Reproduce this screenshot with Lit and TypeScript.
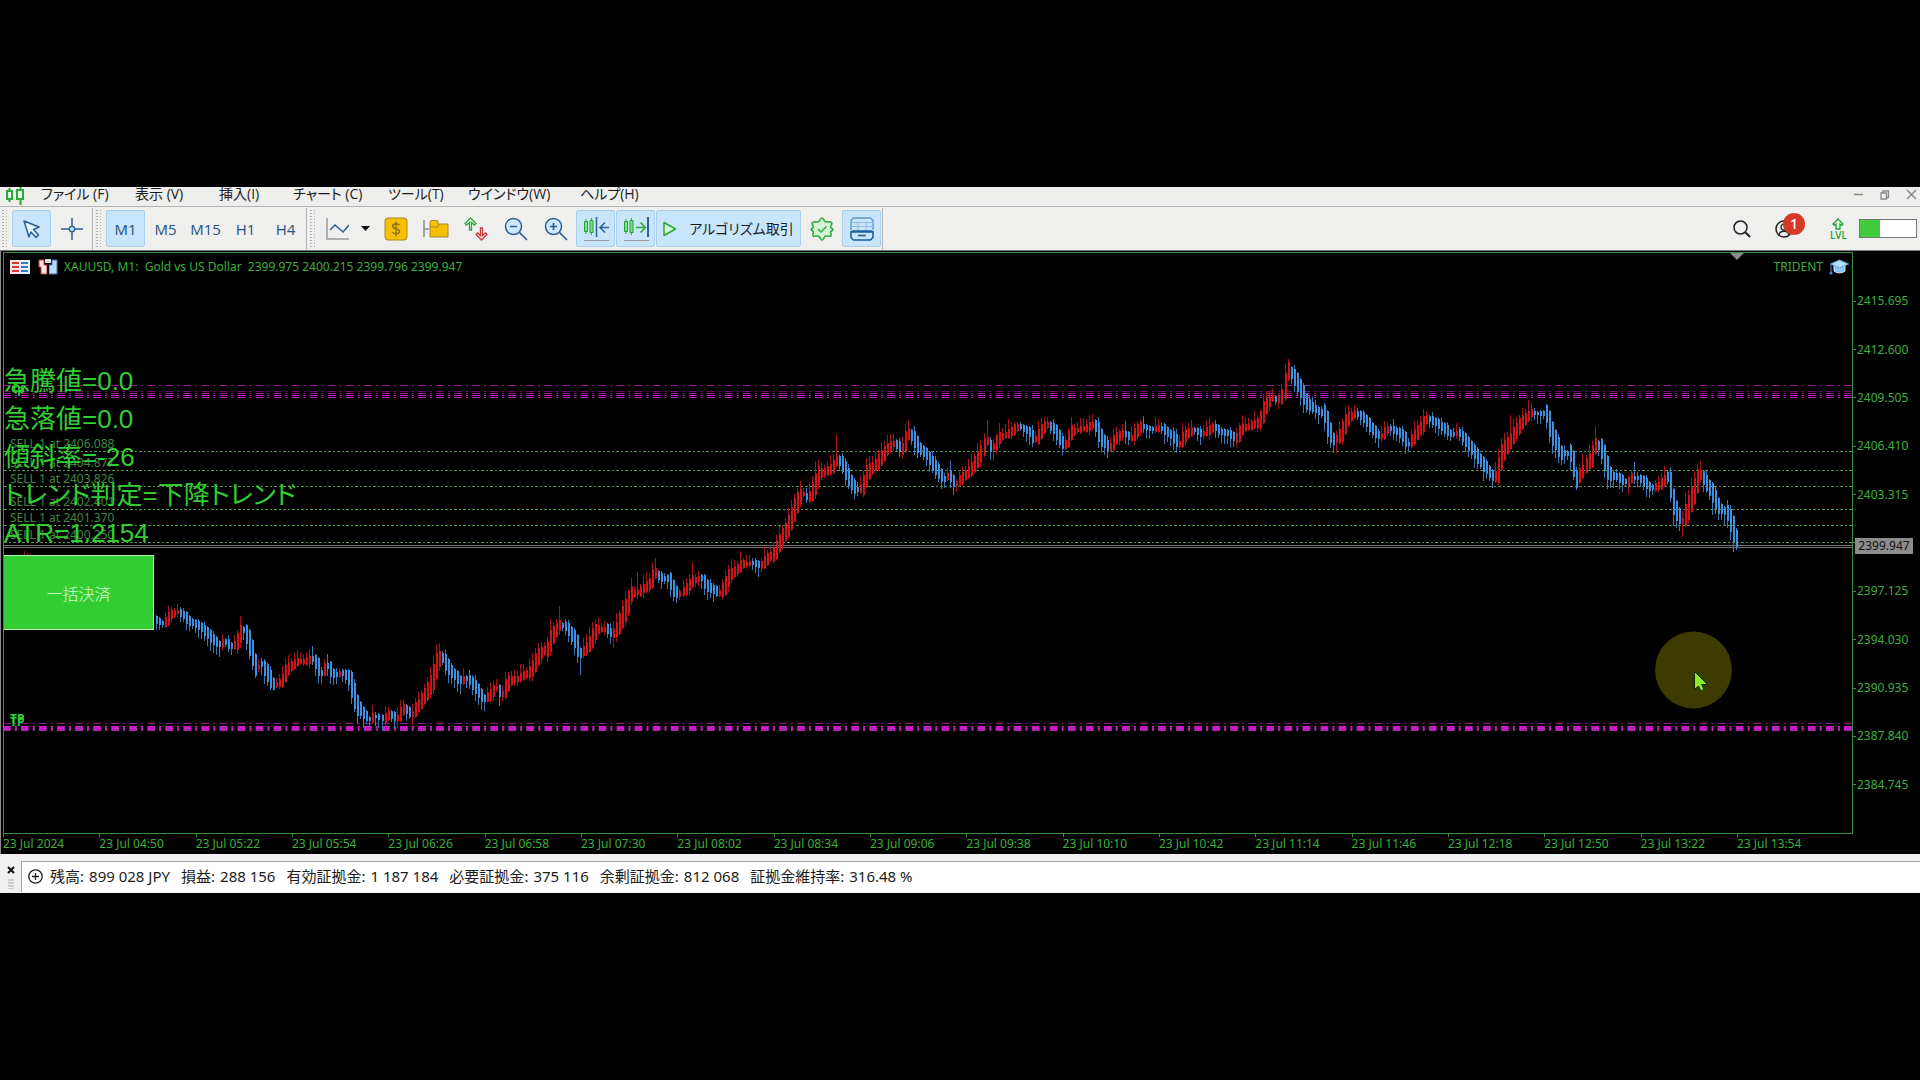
import { LitElement, html, css, svg } from "lit";
import { customElement } from "lit/decorators.js";

/* Plot canvas: the chart is drawn in this coordinate window. */
const VIEW = { x: 4, y: 253, w: 1848, h: 580 };
const STEP = 3.01;
const LAST_X = 1737;

/* Course of the price, as points on the canvas. */
const COURSE: number[][] = [
  [155, 618], [163, 622], [167, 621], [171, 614], [178, 611], [183, 613], [190, 620], [200, 625], [208, 632], [215, 640],
  [220, 643], [226, 641], [232, 645], [237, 643], [241, 633], [244, 629], [248, 635], [253, 652], [257, 668], [262, 663],
  [267, 670], [272, 680], [275, 684], [282, 681], [288, 668], [298, 661], [307, 660], [313, 658], [317, 662], [322, 672],
  [328, 665], [335, 674], [343, 672], [350, 677], [353, 687], [357, 703], [363, 711], [370, 718], [375, 715], [385, 718],
  [390, 713], [398, 717], [405, 707], [413, 713], [420, 703], [427, 692], [433, 680], [439, 658], [443, 657], [447, 663],
  [453, 672], [462, 680], [468, 677], [477, 687], [484, 698], [490, 695], [497, 687], [503, 693], [510, 680], [520, 677],
  [532, 670], [540, 653], [548, 648], [553, 635], [561, 623], [568, 627], [575, 638], [581, 652], [588, 647], [597, 629],
  [608, 628], [613, 634], [618, 627], [627, 607], [632, 593], [640, 591], [650, 583], [656, 572], [663, 577], [670, 578],
  [675, 590], [680, 593], [687, 588], [693, 580], [702, 577], [708, 585], [720, 592], [725, 587], [730, 575], [737, 569],
  [743, 563], [753, 562], [762, 564], [768, 558], [775, 553], [780, 542], [790, 523], [797, 503], [803, 492], [809, 497],
  [815, 487], [818, 475], [827, 470], [833, 467], [838, 458], [843, 463], [850, 478], [857, 489], [863, 487], [868, 472],
  [878, 462], [888, 448], [895, 442], [903, 448], [909, 433], [913, 435], [920, 447], [927, 453], [937, 468], [945, 478],
  [950, 474], [956, 483], [962, 478], [972, 468], [983, 450], [988, 440], [993, 447], [1000, 437], [1010, 432], [1020, 425],
  [1030, 431], [1035, 439], [1038, 437], [1047, 423], [1055, 428], [1065, 445], [1073, 430], [1087, 427], [1095, 423],
  [1102, 437], [1110, 447], [1117, 437], [1125, 432], [1132, 437], [1142, 425], [1153, 428], [1163, 427], [1173, 435],
  [1180, 443], [1187, 433], [1195, 429], [1203, 433], [1215, 426], [1222, 431], [1228, 432], [1237, 437], [1243, 428],
  [1260, 421], [1265, 408], [1272, 397], [1280, 399], [1285, 390], [1289, 370], [1293, 373], [1300, 385], [1308, 403],
  [1317, 409], [1325, 413], [1330, 430], [1335, 440], [1342, 433], [1348, 418], [1357, 412], [1365, 417], [1373, 428],
  [1381, 436], [1390, 427], [1402, 433], [1409, 443], [1417, 433], [1428, 417], [1438, 422], [1452, 433], [1460, 432],
  [1467, 440], [1480, 458], [1495, 477], [1498, 473], [1503, 452], [1512, 438], [1522, 422], [1532, 412], [1547, 413],
  [1553, 433], [1562, 452], [1572, 453], [1577, 478], [1585, 468], [1593, 455], [1597, 442], [1602, 448], [1610, 473],
  [1620, 477], [1628, 482], [1632, 477], [1640, 477], [1652, 487], [1660, 485], [1668, 476], [1671, 484], [1675, 507],
  [1683, 520], [1687, 512], [1695, 490], [1700, 473], [1704, 477], [1712, 490], [1720, 507], [1728, 512], [1733, 524],
  [1737, 538],
];

/* Wick ends that stand out from their neighbours. */
const SPIKES: number[][] = [
  [171, 607], [199, 638], [220, 657], [241, 616], [256, 678], [274, 690], [313, 646], [328, 654], [332, 684], [357, 724],
  [370, 727], [379, 728], [385, 729], [398, 728], [404, 699], [414, 725], [439, 643], [461, 694], [469, 670], [484, 711],
  [503, 702], [561, 606], [551, 619], [582, 675], [614, 648], [638, 572], [656, 558], [677, 603], [693, 562], [700, 571],
  [717, 597], [741, 551], [767, 550], [817, 461], [837, 434], [857, 496], [907, 424], [945, 488], [951, 461], [956, 492],
  [988, 420], [993, 461], [999, 423], [1009, 419], [1047, 417], [1064, 455], [1108, 458], [1125, 421], [1143, 416],
  [1180, 450], [1217, 420], [1231, 447], [1265, 394], [1272, 388], [1279, 409], [1289, 359], [1319, 424], [1336, 453],
  [1354, 405], [1378, 448], [1393, 419], [1408, 452], [1427, 411], [1493, 488], [1511, 415], [1529, 400], [1577, 490],
  [1583, 454], [1595, 426], [1608, 489], [1628, 494], [1634, 462], [1650, 498], [1670, 467], [1674, 526], [1683, 537],
  [1685, 493], [1700, 461], [1713, 515], [1725, 525], [1728, 500], [1734, 552],
];

const ENTRIES = [
  { price: "2406.088", y: 451 },
  { price: "2404.877", y: 470 },
  { price: "2403.826", y: 486 },
  { price: "2402.401", y: 509 },
  { price: "2401.370", y: 525 },
  { price: "2400.250", y: 542 },
];

const PRICES = ["2415.695", "2412.600", "2409.505", "2406.410", "2403.315", "", "2397.125", "2394.030", "2390.935", "2387.840", "2384.745"];

const TIMES = [
  "2024", "04:50", "05:22", "05:54", "06:26", "06:58", "07:30", "08:02", "08:34", "09:06", "09:38", "10:10", "10:42",
  "11:14", "11:46", "12:18", "12:50", "13:22", "13:54",
];

const MENUS = ["ファイル (F)", "表示 (V)", "挿入(I)", "チャート (C)", "ツール(T)", "ウインドウ(W)", "ヘルプ(H)"];

const ACCOUNT: string[][] = [
  ["残高", "899 028 JPY"], ["損益", "288 156"], ["有効証拠金", "1 187 184"], ["必要証拠金", "375 116"],
  ["余剰証拠金", "812 068"], ["証拠金維持率", "316.48 %"],
];

const noise = (n: number) => {
  const s = Math.sin(n * 127.1) * 43758.5453;
  return s - Math.floor(s);
};

const courseAt = (x: number) => {
  const k = COURSE.findIndex((p) => p[0] >= x);
  if (k < 0) return COURSE[COURSE.length - 1][1];
  if (k === 0) return COURSE[0][1];
  const [ax, ay] = COURSE[k - 1];
  const [bx, by] = COURSE[k];
  return ay + ((by - ay) * (x - ax)) / (bx - ax);
};

const buildCandles = () => {
  const paths = { upBody: "", upWick: "", downBody: "", downWick: "" };
  const count = Math.floor((LAST_X - 155) / STEP);
  for (let i = count; i >= 0; i--) {
    const x = Math.round(LAST_X - i * STEP);
    const mid = courseAt(x) + 1;
    const slope = courseAt(x + 3) - courseAt(x - 3);
    const up = slope < 0;
    const half = Math.min(13, 1.5 + Math.abs(slope) * 0.6 + noise(i + 3) * 1.5);
    const top = Math.round(mid - half);
    const bottom = Math.round(mid + half);
    const lead = 2 + noise(i) * 7;
    const lag = noise(i + 77) > 0.6 ? 1 + noise(i + 9) * 4 : 1;
    let wickTop = Math.round(top - (up ? lead : lag));
    let wickBottom = Math.round(bottom + (up ? lag : lead));
    const spike = SPIKES.find((s) => Math.abs(s[0] - x) <= 1);
    if (spike) {
      if (spike[1] < mid) wickTop = Math.min(top, spike[1]);
      else wickBottom = Math.max(bottom, spike[1]);
    }
    const body = `M${x - 1} ${top}h2v${bottom - top}h-2z`;
    const wick = `M${x - 1} ${wickTop}h1v${wickBottom - wickTop}h-1z`;
    if (up) {
      paths.upBody += body;
      paths.upWick += wick;
    } else {
      paths.downBody += body;
      paths.downWick += wick;
    }
  }
  return paths;
};

const left = (x: number) => `left:${((x - VIEW.x) / VIEW.w) * 100}%`;
const top = (y: number) => `top:${((y - VIEW.y) / VIEW.h) * 100}%`;

@customElement("trade-chart")
export class TradeChart extends LitElement {
  static styles = css`
    :host {
      display: block;
      background: #000;
      color: #3fae3f;
      font: 12px/16px "Noto Sans", "Open Sans", sans-serif;
      border-left: 1px solid #8a8a8a;
      padding: 1px 0 0 2px;
    }
    .grid {
      display: grid;
      grid-template-columns: 1fr 67px;
    }
    .plot {
      position: relative;
      border: 1px solid #3b8f3b;
      overflow: hidden;
    }
    .canvas {
      display: block;
      width: 100%;
      height: auto;
      aspect-ratio: 1848 / 580;
    }
    .head {
      position: absolute;
      top: 5px;
      left: 6px;
      right: 3px;
      display: flex;
      align-items: center;
      gap: 6px;
      line-height: 18px;
      white-space: pre;
    }
    .head svg {
      flex: none;
    }
    .icons {
      display: flex;
      gap: 8px;
    }
    .title {
      flex: 1;
    }
    .entry {
      position: absolute;
      left: 6px;
      line-height: 16px;
      margin-top: -16px;
      color: #438543;
    }
    .tag {
      position: absolute;
      color: #32cd32;
      font-weight: 700;
      line-height: 14px;
    }
    .readout {
      position: absolute;
      left: 0;
      margin: 0;
      font: 26px/38px "Liberation Sans", "Noto Sans CJK JP", sans-serif;
      font-feature-settings: "palt";
      color: #32cd32;
      white-space: nowrap;
    }
    .readout div {
      height: 38px;
    }
    .close-all {
      position: absolute;
      left: 0;
      width: 150px;
      height: 75px;
      padding: 0;
      background: #32cd32;
      border: 1px solid #b8eeb0;
      border-left: 0;
      color: #dcffd4;
      font: 300 16px/20px "Noto Sans CJK JP", sans-serif;
    }
    .prices {
      position: relative;
      padding-top: 25px;
      display: flex;
      flex-direction: column;
    }
    .price {
      flex: 0 0 8.684%;
      display: flex;
      align-items: center;
      gap: 1px;
    }
    .price::before {
      content: "";
      width: 3px;
      height: 1px;
      background: #3b8f3b;
    }
    .last {
      position: absolute;
      left: 2px;
      top: 286px;
      width: 58px;
      box-sizing: border-box;
      text-align: center;
      background: #8c8c8c;
      color: #111;
    }
    .times {
      display: flex;
      height: 20px;
    }
    .time {
      flex: 0 0 5.207%;
      position: relative;
      padding-top: 1px;
      line-height: 18px;
      white-space: nowrap;
    }
    .time::before {
      content: "";
      position: absolute;
      left: 0;
      top: 0;
      width: 1px;
      height: 3px;
      background: #3b8f3b;
    }
  `;

  private candles = buildCandles();

  private rails(ys: number[][]) {
    return ys.map(
      ([y, w, o]) => svg`<line x1="3" x2="1852" y1=${y} y2=${y} stroke="#cc22cc" stroke-width=${w} stroke-opacity=${o}
        stroke-dasharray="7.8 4.05 2 4.2" stroke-dashoffset="0.1" />`,
    );
  }

  render() {
    const c = this.candles;
    return html`
      <div class="grid">
        <div class="plot">
          <svg class="canvas" viewBox="4 253 1848 580" role="img" aria-label="XAUUSD M1">
            ${this.rails([[385.5, 1, 0.75], [391.5, 1, 0.5], [393.5, 1, 0.8], [395.5, 1, 1], [397.5, 1, 0.95], [723.5, 1, 0.7], [728, 4, 0.95], [730.5, 1, 0.85]])}
            ${ENTRIES.map((e) => svg`<line x1="4" x2="1852" y1=${e.y + 0.5} y2=${e.y + 0.5} stroke="#4f9a4f" stroke-dasharray="3 2 2 2" />`)}
            <path d="M4 545.5H1852M4 547.5H1852" stroke="#777" />
            <g shape-rendering="crispEdges">
              <path d="M24 551h1v4h-1zM27 553h1v2h-1zM30 553h1v2h-1z" fill="#8e1414" />
              <path d=${c.upWick} fill="#a81216" />
              <path d=${c.downWick} fill="#3c78b8" />
              <path d=${c.upBody} fill="#d01418" />
              <path d=${c.downBody} fill="#3d90e2" />
            </g>
            <path d="M1730 253h14l-7 7z" fill="#8c8c8c" />
            <circle cx="1693.5" cy="670" r="38.5" fill="#3c3b00" />
            <path d="M1694.5 671.5v18l4-3.500 2.500 5 3-1.500-2.300-5h5.800z" fill="#8dec2a" stroke="#0c2a04" />
          </svg>
          <div class="head">
            <span class="icons">
              <svg width="20" height="16" viewBox="0 0 20 16">
                <path d="M0 1h10v14H0z" fill="#fbe4e4" /><path d="M10 1h10v14H10z" fill="#e4f0fc" />
                <path d="M2 4h7M2 8h7M2 12h7" stroke="#d23c3c" stroke-width="2" />
                <path d="M11 4h7M11 8h7M11 12h7" stroke="#3c78c0" stroke-width="2" />
              </svg>
              <svg width="20" height="16" viewBox="0 0 20 16">
                <path d="M1 1h5v5h3v9H3V8H1z" fill="#fbe4e4" stroke="#d23c3c" />
                <path d="M19 1h-5v5h-3v9h8z" fill="#b8dcfa" stroke="#3c78c0" />
                <path d="M7 0h6v4H7z" fill="#ddd" />
                <path d="M10 5v10" stroke="#111" stroke-width="2" />
              </svg>
            </span>
            <span class="title">XAUUSD, M1:  Gold vs US Dollar  2399.975 2400.215 2399.796 2399.947</span>
            <span>TRIDENT</span>
            <svg width="20" height="16" viewBox="0 0 20 16">
              <path d="M5 7v5c3 2.500 8 2.500 11 0V7z" fill="#8cc4f4" stroke="#d4ecff" />
              <path d="M10.500 1L1.500 5l9 4 9-4z" fill="#b8dcfa" stroke="#5aa4e4" />
              <path d="M2 6v7" stroke="#4a94dc" /><circle cx="2" cy="14" r="1.500" fill="#4a94dc" />
            </svg>
          </div>
          ${ENTRIES.map((e) => html`<span class="entry" style=${top(e.y + 1)}>SELL 1 at ${e.price}</span>`)}
          <span class="tag" style="${left(12)};${top(382)}">tp</span>
          <span class="tag" style="${left(10)};${top(712)}">TP</span>
          <span class="tag" style="${left(10)};${top(715)}">TP</span>
          <div class="readout" style=${top(362)}>
            <div>急騰値=0.0</div>
            <div>急落値=0.0</div>
            <div>傾斜率=-26</div>
            <div>トレンド判定=下降トレンド</div>
            <div>ATR=1.2154</div>
          </div>
          <button class="close-all" style=${top(555)}>一括決済</button>
        </div>
        <div class="prices">
          ${PRICES.map((p) => html`<span class="price">${p}</span>`)}
          <span class="last">2399.947</span>
        </div>
        <div class="times">${TIMES.map((t) => html`<span class="time">23 Jul ${t}</span>`)}</div>
      </div>
    `;
  }
}

const candleMark = svg`<path d="M3.500 1v14M14.500 0v18" stroke="#2da83a" stroke-width="2" /><path d="M1 4h5v8H1z" fill="#eafbea" stroke="#2da83a" stroke-width="2" /><path d="M11 3h6v9h-6z" fill="#eafbea" stroke="#2da83a" stroke-width="2" />`;

@customElement("app-root")
export class AppRoot extends LitElement {
  static styles = css`
    :host {
      display: flex;
      flex-direction: column;
      justify-content: center;
      min-height: 100vh;
      background: #000;
      color: #1c1c1c;
      font: 14px/16px "Open Sans", "Noto Sans CJK JP", sans-serif;
      font-feature-settings: "palt";
    }
    button {
      font: inherit;
      font-feature-settings: inherit;
      color: inherit;
      background: none;
      border: 1px solid transparent;
      padding: 0;
      margin: 0;
      display: flex;
      align-items: center;
      justify-content: center;
      white-space: nowrap;
    }
    svg {
      display: block;
      fill: none;
      flex: none;
    }
    .menubar {
      display: flex;
      align-items: flex-start;
      height: 19px;
      background: #eeeeed;
      border-bottom: 1px solid #b4b4b4;
      padding: 0 2px 0 6px;
    }
    .menus {
      display: grid;
      grid-template-columns: 94px 84px 74px 95px 80px 112px auto;
      justify-content: start;
      justify-items: start;
      margin-left: 15px;
      flex: 1;
    }
    .menus button {
      height: 14px;
      line-height: 14px;
    }
    .window {
      display: flex;
      gap: 14px;
      color: #8a8a8a;
    }
    .toolbar {
      display: flex;
      align-items: center;
      height: 43px;
      background: #efefee;
      border-bottom: 1px solid #7c7c7c;
      padding: 0 3px 0 1px;
      color: #24527e;
    }
    .group {
      display: flex;
      gap: 1px;
    }
    .grip {
      width: 6px;
      height: 40px;
      margin-right: 5px;
      background: radial-gradient(circle, #b0b0b0 1px, transparent 1px) 0 0 / 4px 3px;
    }
    .rule {
      width: 1px;
      height: 42px;
      background: #b4b4b4;
      margin: 0 2px;
    }
    .group + .rule {
      margin-left: 1px;
    }
    .tool {
      width: 39px;
      height: 37px;
      box-sizing: border-box;
      border-radius: 2px;
      font-size: 15px;
    }
    .on {
      background: #c9e5fb;
      border-color: #a9d0ee;
    }
    .wide {
      width: 55px;
      gap: 12px;
    }
    .algo {
      width: 145px;
      gap: 12px;
      color: #1c1c1c;
      font-size: 14px;
    }
    .space {
      flex: 1;
    }
    .side {
      display: flex;
      align-items: center;
    }
    .search {
      margin-right: 22px;
    }
    .user {
      position: relative;
      width: 30px;
      justify-content: flex-start;
      margin-right: 26px;
    }
    .badge {
      position: absolute;
      left: 8px;
      top: -7px;
      width: 22px;
      height: 22px;
      border-radius: 50%;
      background: #d63a26;
      color: #fff;
      font-weight: 600;
      line-height: 22px;
      text-align: center;
    }
    .lvl {
      display: flex;
      flex-direction: column;
      align-items: center;
      color: #2a9d3a;
      font: 600 10px/10px "Open Sans", sans-serif;
      margin-right: 12px;
    }
    .meter {
      width: 56px;
      height: 17px;
      border: 1px solid #777;
      background: #fff;
    }
    .fill {
      height: 100%;
      background: #41cc3e;
    }
    .status {
      display: flex;
      gap: 5px;
      height: 32px;
      padding: 7px 0 0 6px;
      background: #f0f0f0;
    }
    .handle {
      width: 10px;
      display: flex;
      flex-direction: column;
      align-items: center;
      padding-top: 4px;
      gap: 4px;
    }
    .panel {
      flex: 1;
      display: flex;
      align-items: center;
      gap: 7px;
      height: 28px;
      padding: 0 0 2px 6px;
      background: #fff;
      border-top: 1px solid #a8a8a8;
      border-left: 1px solid #a8a8a8;
      font: 15px/20px "Noto Sans", "Noto Sans CJK JP", sans-serif;
      font-feature-settings: normal;
    }
    .figures {
      display: flex;
      gap: 11px;
      margin: 0;
    }
    .figure {
      display: flex;
      gap: 5px;
    }
    dt,
    dd {
      margin: 0;
    }
  `;

  render() {
    return html`
      <nav class="menubar">
        <svg width="19" height="18" viewBox="0 0 19 18">${candleMark}</svg>
        <div class="menus">${MENUS.map((m) => html`<button>${m}</button>`)}</div>
        <div class="window">
          <button aria-label="Minimize"><svg width="11" height="13"><path d="M1 6.500h9" stroke="#8a8a8a" stroke-width="1.500" /></svg></button>
          <button aria-label="Restore">
            <svg width="10" height="13"><path d="M1 5h5.500v6H1zM3 5V3h5.500v6.500H6.500" stroke="#8a8a8a" stroke-width="1.300" /></svg>
          </button>
          <button aria-label="Close"><svg width="11" height="13"><path d="M1 2l9 9M10 2l-9 9" stroke="#8a8a8a" stroke-width="1.500" /></svg></button>
        </div>
      </nav>

      <div class="toolbar">
        <span class="grip"></span>
        <div class="group">
          <button class="tool on" aria-label="Cursor">
            <svg width="22" height="22" viewBox="0 0 22 22"><path d="M3 3l15 6-5.500 2.500 5 5.500-2.500 2.500-5-5.500-2 5z" fill="#e6f4ff" stroke="#2a5f94" stroke-width="1.500" stroke-linejoin="round" /></svg>
          </button>
          <button class="tool" aria-label="Crosshair">
            <svg width="22" height="22" viewBox="0 0 22 22"><path d="M0 11h8M14 11h8M11 0v8M11 14v8" stroke="#2a5f94" stroke-width="1.500" /><circle cx="11" cy="11" r="2.700" fill="#bfe0fa" stroke="#2a5f94" stroke-width="1.300" /></svg>
          </button>
        </div>
        <span class="rule"></span>
        <span class="grip"></span>
        <div class="group">
          <button class="tool on">M1</button>
          <button class="tool">M5</button>
          <button class="tool">M15</button>
          <button class="tool">H1</button>
          <button class="tool">H4</button>
        </div>
        <span class="rule"></span>
        <span class="grip"></span>
        <div class="group">
          <button class="tool wide" aria-label="Line chart">
            <svg width="23" height="24" viewBox="0 0 23 24"><path d="M1 1v21h22" stroke="#9a9a9a" stroke-width="1.500" /><path d="M4 13l5-5 8 7 6-7" stroke="#2a5f94" stroke-width="1.500" /></svg>
            <svg width="9" height="6"><path d="M0 0h9L4.500 5z" fill="#111" /></svg>
          </button>
          <button class="tool" aria-label="Symbols">
            <svg width="24" height="24" viewBox="0 0 24 24"><rect x="1" y="1" width="22" height="22" rx="3" fill="#f6c000" stroke="#a8882a" /><path d="M15.500 8c-1-1.500-6.500-2-6.800 1-.3 3.500 7 2 6.800 5.500-.3 3-6 2.800-7.200.5M12 4.500v15" stroke="#8f7318" stroke-width="1.500" /></svg>
          </button>
          <button class="tool" aria-label="Folders">
            <svg width="26" height="22" viewBox="0 0 26 22"><path d="M1 2v17M1 11h5" stroke="#8a8a8a" stroke-width="1.500" /><path d="M7 19V3.500l1-1h6.500l1 3.500H25v13z" fill="#f6c000" stroke="#a8882a" /><path d="M7 9h7.500l1.500-3" stroke="#a8882a" /></svg>
          </button>
          <button class="tool" aria-label="Orders">
            <svg width="24" height="24" viewBox="0 0 24 24"><path d="M6.500 1L12 6.500 10.500 8 7.500 5.500V13h-2V5.500L2.500 8 1 6.500z" fill="#dff6df" stroke="#2da83a" stroke-width="1.300" /><path d="M17.500 23L23 17.500 21.500 16l-3 2.500V11h-2v7.500l-3-2.500-1.500 1.500z" fill="#fbe2e2" stroke="#c43c3c" stroke-width="1.300" /></svg>
          </button>
          <button class="tool" aria-label="Zoom out">
            <svg width="24" height="24" viewBox="0 0 24 24"><circle cx="9.500" cy="9.500" r="8" fill="#cde8fb" stroke="#2a5f94" stroke-width="1.500" /><path d="M6 9.500h7M15 15l8 8" stroke="#2a5f94" stroke-width="1.700" /></svg>
          </button>
          <button class="tool" aria-label="Zoom in">
            <svg width="24" height="24" viewBox="0 0 24 24"><circle cx="9.500" cy="9.500" r="8" fill="#cde8fb" stroke="#2a5f94" stroke-width="1.500" /><path d="M6 9.500h7M9.500 6v7M15 15l8 8" stroke="#2a5f94" stroke-width="1.700" /></svg>
          </button>
          <button class="tool on" aria-label="Chart shift">
            <svg width="26" height="26" viewBox="0 0 26 26"><path d="M3 3v15M8.500 2v17" stroke="#2da83a" /><path d="M1.500 5.500h3v10h-3zM7 4.500h3v12H7z" fill="#7fe27f" stroke="#22a030" /><path d="M13.500 1v20" stroke="#2a5f94" stroke-width="1.500" /><path d="M26 11.500h-8M22 6.500l-5 5 5 5" stroke="#2a5f94" stroke-width="1.500" /><path d="M1 24.500h25" stroke="#a0a0a0" /></svg>
          </button>
          <button class="tool on" aria-label="Auto scroll">
            <svg width="26" height="26" viewBox="0 0 26 26"><path d="M3 3v15M8.500 2v17" stroke="#2da83a" /><path d="M1.500 5.500h3v10h-3zM7 4.500h3v12H7z" fill="#7fe27f" stroke="#22a030" /><path d="M25 1v20" stroke="#2a5f94" stroke-width="2" /><path d="M13 11.500h8M17.500 6.500l5 5-5 5" stroke="#2da83a" stroke-width="1.500" /><path d="M1 24.500h25" stroke="#a0a0a0" /></svg>
          </button>
          <button class="tool on algo">
            <svg width="14" height="16" viewBox="0 0 14 16"><path d="M1 1.500v13L12.500 8z" fill="#d4f5d4" stroke="#2da83a" stroke-width="1.500" stroke-linejoin="round" /></svg>
            アルゴリズム取引
          </button>
          <button class="tool" aria-label="Verified">
            <svg width="24" height="24" viewBox="0 0 24 24"><path d="M12 1c1.500 0 2 3 3.500 3.700S20 4 21.500 5.500 20.500 9 20.500 10s2.500 1.500 2.500 2.500-2.500 1.500-2.500 2.500 1.500 3 .5 4-4-.5-5.500 0S13.500 23 12 23s-2-3.500-3.500-4-4.500 1-5.500 0 .5-3 .5-4S1 13.500 1 12.500 3.500 11 3.500 10 1 7 2.500 5.500 7 5.400 8.500 4.700 10.500 1 12 1z" fill="#d4f5d4" stroke="#2da83a" stroke-width="1.500" stroke-linejoin="round" /><path d="M8 12l3 3 5.500-5.500" stroke="#2da83a" stroke-width="1.500" /></svg>
          </button>
          <button class="tool on" aria-label="Toolbox">
            <svg width="24" height="24" viewBox="0 0 24 24"><path d="M1 13V3.500L3.500 1h17L23 3.500V13" stroke="#5a96cc" stroke-width="1.300" /><path d="M1 5.500h22M1 9.500h22M8 5v9M16 5v9" stroke="#8cbae4" /><path d="M1 15h22v5.500L20.500 23h-17L1 20.500zM1 15l2-1h18l2 1" stroke="#1f5f9c" stroke-width="1.600" /><path d="M8 18.500h8" stroke="#1f5f9c" stroke-width="1.600" /></svg>
          </button>
        </div>
        <span class="rule"></span>
        <span class="space"></span>
        <div class="side">
          <button class="search" aria-label="Search">
            <svg width="18" height="18" viewBox="0 0 18 18"><circle cx="7.500" cy="7.500" r="6.500" stroke="#222" stroke-width="1.500" /><path d="M12.500 12.500L17 17" stroke="#222" stroke-width="2" /></svg>
          </button>
          <button class="user" aria-label="Account">
            <svg width="18" height="18" viewBox="0 0 18 18"><circle cx="9" cy="9" r="8" stroke="#222" stroke-width="1.500" /><circle cx="9" cy="7" r="3" stroke="#222" stroke-width="1.300" /><path d="M4 15c1-5 9-5 10 0" stroke="#222" stroke-width="1.300" /></svg>
            <span class="badge">1</span>
          </button>
          <span class="lvl">
            <svg width="12" height="12" viewBox="0 0 12 12"><path d="M6 1l5 5-1.300 1.300L8 6v5H4V6L2.300 7.300 1 6z" fill="#dff6df" stroke="#2a9d3a" stroke-width="1.300" /></svg>
            LVL
          </span>
          <div class="meter"><div class="fill" style="width:36%"></div></div>
        </div>
      </div>

      <trade-chart></trade-chart>

      <footer class="status">
        <div class="handle">
          <button aria-label="Close panel"><svg width="8" height="8"><path d="M1 1l6 6M7 1L1 7" stroke="#111" stroke-width="2" /></svg></button>
          <svg width="6" height="10"><path d="M0 1h6M0 4h6M0 7h6M0 10h6" stroke="#aaa" /></svg>
        </div>
        <div class="panel">
          <svg width="15" height="15" viewBox="0 0 15 15"><circle cx="7.500" cy="7.500" r="6.700" stroke="#222" stroke-width="1.300" /><path d="M7.500 4v7M4 7.500h7" stroke="#222" stroke-width="1.300" /></svg>
          <dl class="figures">${ACCOUNT.map(([k, v]) => html`<div class="figure"><dt>${k}:</dt><dd>${v}</dd></div>`)}</dl>
        </div>
      </footer>
    `;
  }
}
